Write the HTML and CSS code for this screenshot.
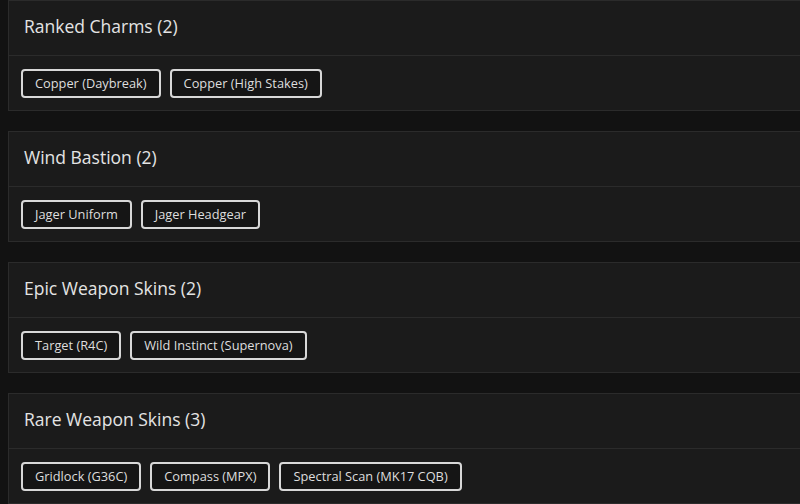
FILE: index.html
```html
<!DOCTYPE html>
<html>
<head>
<meta charset="utf-8">
<link rel="stylesheet" href="styles.css">
</head>
<body>
<main class="list">
  <section class="card">
    <header class="card-head"><h2 class="card-title">Ranked Charms (2)</h2></header>
    <div class="card-body">
      <span class="chip">Copper (Daybreak)</span>
      <span class="chip">Copper (High Stakes)</span>
    </div>
  </section>
  <section class="card">
    <header class="card-head"><h2 class="card-title">Wind Bastion (2)</h2></header>
    <div class="card-body">
      <span class="chip">Jager Uniform</span>
      <span class="chip">Jager Headgear</span>
    </div>
  </section>
  <section class="card">
    <header class="card-head"><h2 class="card-title">Epic Weapon Skins (2)</h2></header>
    <div class="card-body">
      <span class="chip">Target (R4C)</span>
      <span class="chip">Wild Instinct (Supernova)</span>
    </div>
  </section>
  <section class="card">
    <header class="card-head"><h2 class="card-title">Rare Weapon Skins (3)</h2></header>
    <div class="card-body">
      <span class="chip">Gridlock (G36C)</span>
      <span class="chip">Compass (MPX)</span>
      <span class="chip">Spectral Scan (MK17 CQB)</span>
    </div>
  </section>
</main>
</body>
</html>
```

FILE: styles.css
```css
html, body {
  margin: 0;
  padding: 0;
  background: #121212;
  overflow: hidden;
}
body {
  font-family: "Open Sans", "DejaVu Sans", sans-serif;
  color: #e2e2e2;
}
.list {
  display: flex;
  flex-direction: column;
  gap: 20px;
  margin-left: 8px;
  width: 800px;
}
.card {
  background: #1b1b1b;
  border: 1px solid #2b2b2b;
}
.card-head {
  box-sizing: border-box;
  height: 55px;
  display: flex;
  align-items: center;
  padding: 0 0 4px 15px;
  border-bottom: 1px solid #2b2b2b;
}
.card-title {
  margin: 0;
  font-size: 17.5px;
  line-height: 22px;
  font-weight: 500;
  color: #e4e4e4;
}
.card-body {
  height: 54px;
  display: flex;
  align-items: center;
  gap: 9px;
  padding-left: 12px;
}
.chip {
  box-sizing: border-box;
  height: 29px;
  display: inline-flex;
  align-items: center;
  padding: 0 12px 1px;
  border: 2px solid #d8d8d8;
  border-radius: 4px;
  background: #151515;
  font-size: 12.8px;
  color: #dedede;
}
```
